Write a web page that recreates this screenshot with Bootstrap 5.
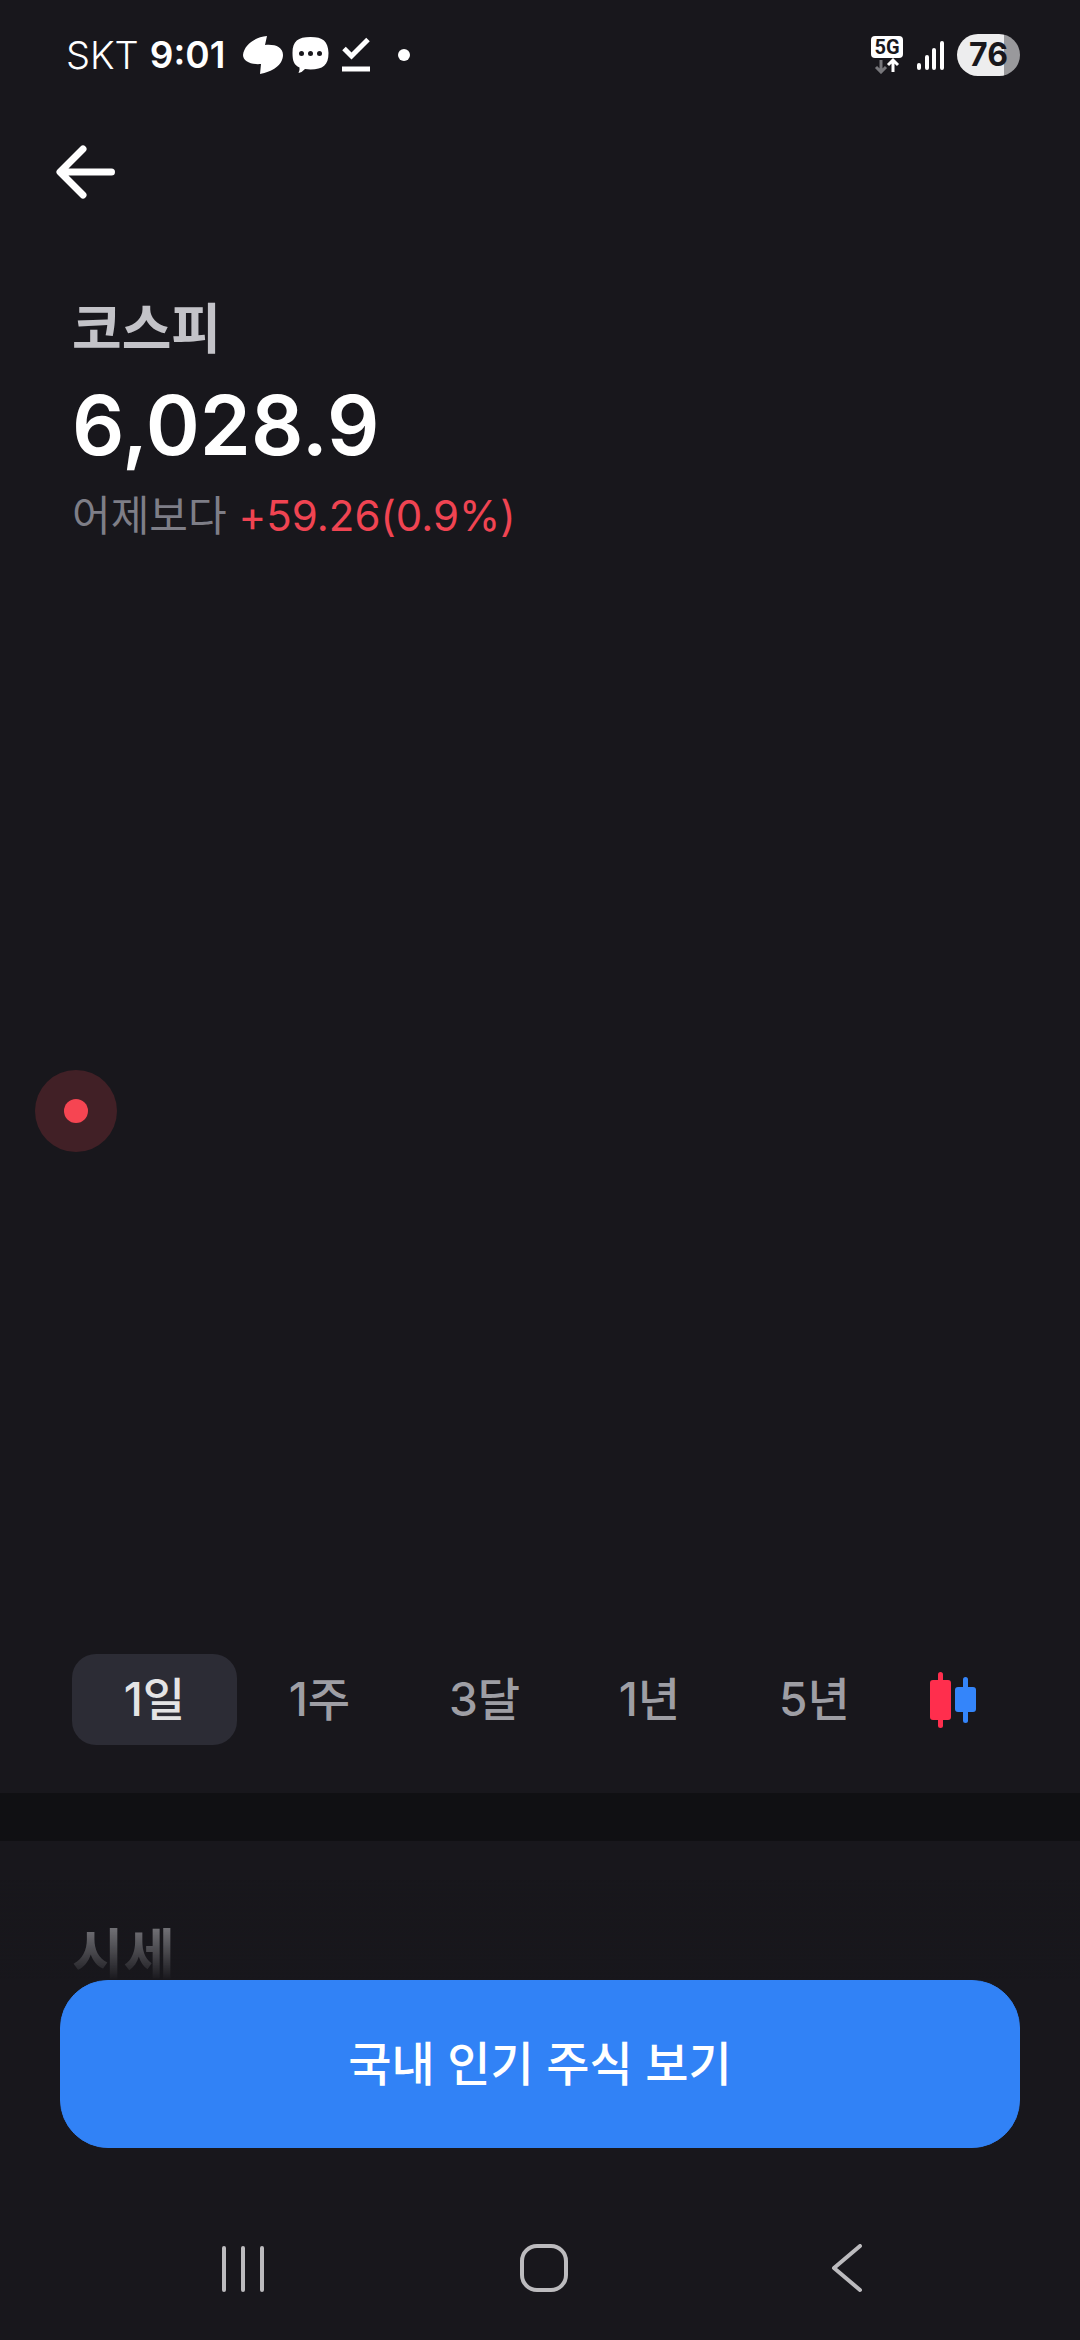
<!DOCTYPE html>
<html lang="ko" data-bs-theme="dark">
<head>
<meta charset="utf-8">
<meta name="viewport" content="width=device-width, initial-scale=1">
<title>코스피</title>
<link href="https://cdn.jsdelivr.net/npm/bootstrap@5.3.0/dist/css/bootstrap.min.css" rel="stylesheet">
<style>
  :root { --ink: #18171c; --gutter: 72px; }
  body { background: var(--ink); color: #fff; font-family: Inter, "Noto Sans CJK KR", sans-serif; }
  svg { display: block; flex: none; }
  .status-bar { height: 110px; padding: 0 60px 0 66px; }
  .carrier { font-size: 38px; line-height: 48px; font-weight: 300; }
  .clock { font-size: 37px; line-height: 48px; font-weight: 600; margin-left: 11px; }
  .status-icons { gap: 9px; margin-left: 18px; }
  .more-dot { margin-left: 18px; }
  .battery { width: 63px; height: 42px; border-radius: 21px; background: linear-gradient(to right, #ededee 75%, #99999c 75%); color: var(--ink); font-size: 32px; line-height: 42px; font-weight: 700; }
  .top-bar { height: 124px; padding: 0 52px; }
  .icon-btn { background: none; border: 0; padding: 0; }
  .index-head { padding: 58px var(--gutter) 0; }
  .index-name { font-size: 54px; line-height: 76px; font-weight: 700; color: #c3c3c8; }
  .index-value { font-size: 82px; line-height: 116px; font-weight: 600; }
  .index-change { font-size: 42px; line-height: 64px; color: #7e7e87; }
  .rise { color: #f04452; }
  .chart-area { height: 1106px; padding-top: 20px; }
  .live-dot { width: 82px; height: 82px; margin-left: 35px; border-radius: 50%; background: #412026; }
  .live-dot i { width: 24px; height: 24px; border-radius: 50%; background: #f64552; }
  .range-tabs { padding: 0 var(--gutter) 48px; }
  .range-tabs .nav-link { height: 91px; padding: 0; border-radius: 24px; font-size: 46px; line-height: 91px; font-weight: 500; color: #9e9ea4; }
  .range-tabs .nav-link.active { background: #2c2c35; color: #e4e4e5; }
  .range-tabs .nav-item { flex: 165 1 0; }
  .range-tabs .candle-item { flex: 111 1 0; }
  .divider-band { height: 48px; background: #101013; }
  .quote-title { padding: 76px var(--gutter) 0; font-size: 56px; line-height: 76px; font-weight: 700; color: #c3c3c8; }
  .fade-edge { height: 100px; background: linear-gradient(to bottom, rgba(24,23,28,0), #18171c); }
  .action-area { background: var(--ink); padding: 0 60px; }
  .btn-action { --bs-btn-color: #fff; --bs-btn-bg: #3182f6; --bs-btn-border-color: #3182f6; --bs-btn-hover-bg: #2272eb; --bs-btn-hover-color: #fff; height: 168px; border-radius: 48px; font-size: 47px; line-height: 60px; font-weight: 500; }
  .system-nav { height: 192px; padding: 96px 84px 0 92px; background: var(--ink); }
  .system-nav .icon-btn { flex: 1 1 0; display: flex; justify-content: center; }
</style>
</head>
<body>
<header class="status-bar d-flex justify-content-between align-items-center">
  <div class="d-flex align-items-center">
    <span class="carrier">SKT</span>
    <span class="clock">9:01</span>
    <div class="status-icons d-flex align-items-center">
      <svg width="40" height="38" viewBox="0 0 40 38" fill="#fff"><path d="M24 0 22 9C32 8 40 11 40 19 40 29 29 36 17 38L18 28C8 29 0 25 0 19 1 9 12 1 24 0Z"/></svg>
      <svg width="37" height="38" viewBox="0 0 37 38"><path fill="#fff" d="M18.500 1C31 1 36 5 36.500 17 36.500 29 31 33.500 18.500 33.500L13 33Q10 36.500 6.500 37 8 34 7.500 31.500C2 29 .5 25 .5 17 .5 5 6 1 18.500 1Z"/><g fill="#18171c"><circle cx="9.500" cy="17.500" r="2.500"/><circle cx="18.500" cy="17.500" r="2.500"/><circle cx="27.500" cy="17.500" r="2.500"/></g></svg>
      <svg class="ms-1" width="28" height="38" viewBox="0 0 28 38" fill="none" stroke="#fff" stroke-width="5"><path d="M2 12.500 9.500 20 26 3.500M0 33H28"/></svg>
      <svg class="more-dot" width="14" height="38" viewBox="0 0 14 38" fill="#fff"><circle cx="7" cy="19" r="6"/></svg>
    </div>
  </div>
  <div class="d-flex align-items-center">
    <svg width="32" height="38" viewBox="0 0 32 38"><rect width="32" height="22" rx="4" fill="#fff"/><text x="16" y="18" text-anchor="middle" font-family="Roboto, sans-serif" font-size="20" font-weight="700" fill="#18171c">5G</text><path d="M10 24V36M5 31 10 36 15 31" fill="none" stroke="#77777b" stroke-width="3"/><path d="M22 36V24M17 29 22 24 27 29" fill="none" stroke="#fff" stroke-width="3"/></svg>
    <svg class="mx-2" width="38" height="38" viewBox="0 0 38 38" stroke="#fff" stroke-width="4" stroke-linecap="round"><path d="M8 29V32M16 21V32M23 14V32M31 7V32"/></svg>
    <div class="battery text-center">76</div>
  </div>
</header>

<nav class="top-bar d-flex align-items-center">
  <button class="icon-btn" type="button" aria-label="뒤로"><svg width="64" height="64" viewBox="0 0 64 64" fill="none" stroke="#fff" stroke-width="7" stroke-linecap="round" stroke-linejoin="round"><path d="M59.500 32H9M31 9 8 32 31 55"/></svg></button>
</nav>

<main>
  <section class="index-head">
    <h1 class="index-name mb-0">코스피</h1>
    <div class="index-value">6,028.9</div>
    <div class="index-change">어제보다 <span class="rise">+59.26(0.9%)</span></div>
  </section>

  <section class="chart-area d-flex align-items-center">
    <div class="live-dot d-flex align-items-center justify-content-center"><i></i></div>
  </section>

  <ul class="range-tabs nav nav-pills align-items-center text-center">
    <li class="nav-item"><button class="nav-link active w-100" type="button">1일</button></li>
    <li class="nav-item"><button class="nav-link w-100" type="button">1주</button></li>
    <li class="nav-item"><button class="nav-link w-100" type="button">3달</button></li>
    <li class="nav-item"><button class="nav-link w-100" type="button">1년</button></li>
    <li class="nav-item"><button class="nav-link w-100" type="button">5년</button></li>
    <li class="candle-item d-flex justify-content-center"><button class="icon-btn" type="button" aria-label="캔들 차트"><svg width="46" height="56" viewBox="0 0 46 56"><g fill="#ff2e4d"><rect x="8" width="5" height="56" rx="2.500"/><rect y="8" width="21" height="40" rx="3"/></g><g fill="#3485fa"><rect x="33" y="5" width="5" height="46" rx="2.500"/><rect x="25" y="15" width="21" height="25" rx="3"/></g></svg></button></li>
  </ul>

  <div class="divider-band"></div>
  <h2 class="quote-title mb-0">시세</h2>
</main>

<footer class="fixed-bottom">
  <div class="fade-edge"></div>
  <div class="action-area"><button class="btn btn-action w-100" type="button">국내 인기 주식 보기</button></div>
  <div class="system-nav d-flex align-items-start">
    <button class="icon-btn" type="button" aria-label="최근 앱"><svg width="48" height="50" viewBox="0 0 48 50" stroke="#bcbbbe" stroke-width="4" stroke-linecap="round"><path d="M5 4V46M24 4V46M43 4V46"/></svg></button>
    <button class="icon-btn" type="button" aria-label="홈"><svg width="50" height="50" viewBox="0 0 50 50" fill="none" stroke="#bcbbbe" stroke-width="4"><rect x="3" y="2" width="44" height="44" rx="15"/></svg></button>
    <button class="icon-btn" type="button" aria-label="뒤로 가기"><svg width="50" height="50" viewBox="0 0 50 50" fill="none" stroke="#bcbbbe" stroke-width="4" stroke-linecap="round" stroke-linejoin="round"><path d="M40 2 14 24 40 46"/></svg></button>
  </div>
</footer>
<script src="https://cdn.jsdelivr.net/npm/bootstrap@5.3.0/dist/js/bootstrap.bundle.min.js"></script>
</body>
</html>
